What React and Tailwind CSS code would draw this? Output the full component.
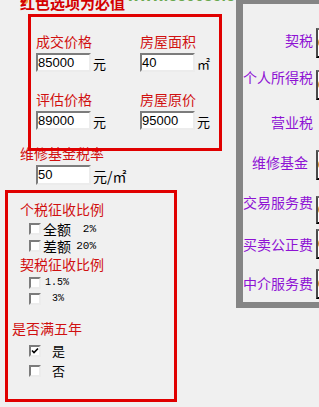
import React from 'react';

const sunken =
  'bg-white border-2 border-t-[#7c7c7c] border-l-[#7c7c7c] border-r-[#ececec] border-b-[#ececec]';

const Box = ({ value, className = '' }) => (
  <div
    className={`${sunken} w-[55px] h-[19px] pl-[0px] text-[13px] leading-[15px] text-black font-['Liberation_Sans',sans-serif] ${className}`}
  >
    {value}
  </div>
);

const Check = ({ checked }) => (
  <div className={`${sunken} w-[12px] h-[12px] shrink-0 relative`}>
    {checked && (
      <svg viewBox="0 0 8 8" className="absolute left-0 top-0 w-[8px] h-[8px]">
        <path d="M1 3.5 L3 5.5 L7 1.5" stroke="#000" strokeWidth="1.6" fill="none" />
      </svg>
    )}
  </div>
);

const Price = ({ label, value, unit, mt }) => (
  <div>
    <div className={`text-[14px] leading-[16px] text-[#d01010] ${mt}`}>{label}</div>
    <div className="flex items-end">
      <Box value={value} className="mt-[4px]" />
      <span className="ml-[2px] text-[13px] leading-[16px] text-black">{unit}</span>
    </div>
  </div>
);

const taxRows = [
  { label: '契税', mt: 'mt-[24px]', lt: 'mt-[4px]', box: 'h-[30px]' },
  { label: '个人所得税', mt: 'mt-[11px]', lt: 'mt-0', box: 'h-[30px] mt-[1px]' },
  { label: '营业税', mt: 'mt-[14px]', lt: 'mt-0', box: null },
  { label: '维修基金', mt: 'mt-[20px]', lt: 'mt-[4px]', box: 'h-[30px]', pr: 'pr-[5px]' },
  { label: '交易服务费', mt: 'mt-[14px]', lt: 'mt-0', box: 'h-[28px] mt-[2px]' },
  { label: '买卖公正费', mt: 'mt-[5px]', lt: 'mt-[7px]', box: 'h-[30px]' },
  { label: '中介服务费', mt: 'mt-[10px]', lt: 'mt-[6px]', box: 'h-[30px]' },
];

export default function App() {
  return (
    <div className="w-[319px] h-[407px] overflow-hidden bg-[#f0f0f0] flex items-start font-['Noto_Sans_CJK_SC','Noto_Sans',sans-serif]">
      {/* left column */}
      <div className="w-[236px] shrink-0">
        <div className="h-[14px] overflow-hidden flex items-start">
          <span className="ml-[22px] w-[6px] h-[4px] rounded-b-full bg-[#f0a040] shrink-0" />
          <span className="ml-[-8px] mt-[-6px] text-[15px] leading-[17px] font-bold text-[#d40000] whitespace-nowrap">
            红色选项为必值
          </span>
          <span className="ml-[2px] mt-[-13px] text-[16px] leading-[18px] font-bold text-[#6aa84f] whitespace-nowrap font-['Liberation_Sans',sans-serif]">
            www.cc0059.com
          </span>
        </div>

        <div className="relative z-10 ml-[28px] w-[194px] h-[137px] border-[3px] border-[#e00000] pl-[5px] grid grid-cols-[104px_1fr] content-start">
          <Price label="成交价格" value="85000" unit="元" mt="mt-[16px]" />
          <Price label="房屋面积" value="40" unit="㎡" mt="mt-[16px]" />
          <Price label="评估价格" value="89000" unit="元" mt="mt-[19px]" />
          <Price label="房屋原价" value="95000" unit="元" mt="mt-[19px]" />
        </div>

        <div className="ml-[20px] mt-[-6px] text-[14px] leading-[16px] text-[#d01010]">维修基金税率</div>
        <div className="ml-[36px] mt-[4px] flex items-end">
          <Box value="50" className="h-[20px]" />
          <span className="ml-[2px] text-[14px] leading-[17px] text-black">元/㎡</span>
        </div>

        <div className="ml-[5px] mt-[5px] w-[172px] h-[212px] border-[3px] border-[#e00000] text-[14px] leading-[16px]">
          <div className="ml-[12px] mt-[8px] text-[#d01010]">个税征收比例</div>
          <div className="ml-[21px] mt-[4px] flex items-center h-[16px]">
            <Check />
            <span className="ml-[2px] w-[28px] text-black">全额</span>
            <span className="w-[25px] text-right text-[11px] leading-[14px] text-black font-['Liberation_Mono',monospace]">2%</span>
          </div>
          <div className="ml-[21px] mt-[1px] flex items-center h-[16px]">
            <Check />
            <span className="ml-[2px] w-[28px] text-black">差额</span>
            <span className="w-[25px] text-right text-[11px] leading-[14px] text-black font-['Liberation_Mono',monospace]">20%</span>
          </div>

          <div className="ml-[12px] mt-[2px] text-[#d01010]">契税征收比例</div>
          <div className="ml-[21px] mt-[4px] flex items-center h-[14px]">
            <Check />
            <span className="ml-[4px] text-[10px] leading-[12px] text-black font-['Liberation_Mono',monospace]">1.5%</span>
          </div>
          <div className="ml-[21px] mt-[2px] flex items-center h-[14px]">
            <Check />
            <span className="ml-[11px] text-[10px] leading-[12px] text-black font-['Liberation_Mono',monospace]">3%</span>
          </div>

          <div className="ml-[4px] mt-[14px] text-[#d01010]">是否满五年</div>
          <div className="ml-[21px] mt-[8px] flex items-center h-[14px]">
            <Check checked />
            <span className="ml-[11px] text-[13px] leading-[14px] text-black">是</span>
          </div>
          <div className="ml-[21px] mt-[6px] flex items-center h-[14px]">
            <Check />
            <span className="ml-[11px] text-[13px] leading-[14px] text-black">否</span>
          </div>
        </div>
      </div>

      {/* right panel, cut off by the window */}
      <div className="h-[308px] w-[120px] shrink-0 overflow-hidden border-t-4 border-l-[7px] border-b-[6px] border-[#858585]">
        <div className="h-full border-b border-white">
          {taxRows.map((r) => (
            <div key={r.label} className={`flex items-start ${r.mt}`}>
              <div
                className={`w-[70px] text-right text-[14px] leading-[16px] text-[#8e12d4] whitespace-nowrap ${r.lt} ${r.pr || ''}`}
              >
                {r.label}
              </div>
              {r.box && (
                <div
                  className={`ml-[3px] w-[40px] ${r.box} bg-white border-2 border-t-[#6a6a6a] border-l-[#4a4a4a] flex items-center text-[13px] font-['Liberation_Sans',sans-serif] text-black`}
                >
                  0.00
                </div>
              )}
            </div>
          ))}
        </div>
      </div>
    </div>
  );
}
